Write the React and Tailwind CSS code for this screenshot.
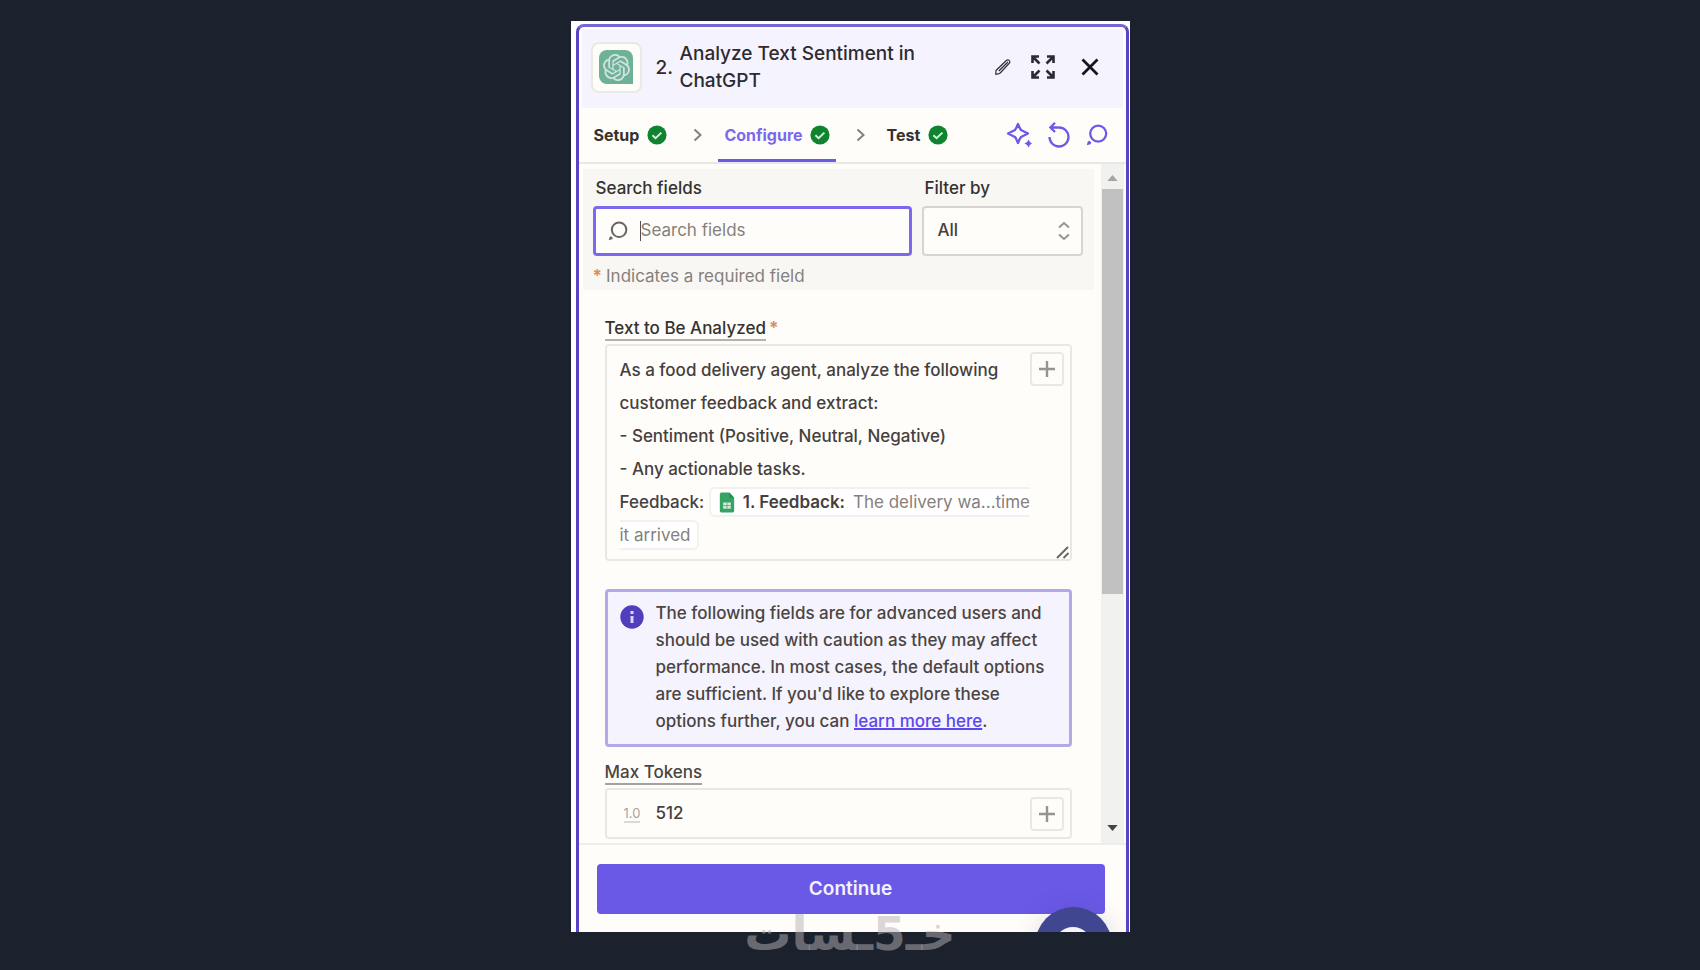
import React from "react";
import { SiOpenai } from "react-icons/si";

function CheckBadge() {
  return (
    <svg viewBox="0 0 20 20" className="size-5 shrink-0" aria-hidden="true">
      <circle cx="10" cy="10" r="9.6" fill="#0f8430" />
      <path d="M5.4 10.2l3.2 3 5.8-5.6" fill="none" stroke="#dcebdc" strokeWidth="2" />
    </svg>
  );
}

function Chevron() {
  return (
    <svg viewBox="0 0 10 14" className="h-[14px] w-[10px] shrink-0" aria-hidden="true">
      <path d="M1.5 1.5L7.5 7l-6 5.5" fill="none" stroke="#85807c" strokeWidth="2" />
    </svg>
  );
}

function Loupe({ className, width }) {
  return (
    <svg viewBox="0 0 22 22" className={className} aria-hidden="true">
      <circle cx="12.2" cy="9.6" r="8" fill="none" stroke="currentColor" strokeWidth={width} />
      <path d="M0.8 21.2l1-3.6 1.6-.8 2 1.8-1 1.6z" fill="currentColor" />
    </svg>
  );
}

function PlusButton({ label }) {
  return (
    <button
      type="button"
      aria-label={label}
      className="flex size-[34px] shrink-0 items-center justify-center rounded border-2 border-[#eae8e3] bg-[#fffdf9]"
    >
      <svg viewBox="0 0 18 18" className="size-[18px]" aria-hidden="true">
        <path d="M9 1v16M1 9h16" stroke="#98938f" strokeWidth="2.4" />
      </svg>
    </button>
  );
}

function Header() {
  return (
    <header className="mx-[3px] mt-[2px] flex items-center bg-[#f5f3fd] pb-[14px] pl-[9px] pr-6 pt-[11px] text-[#2d2a30]">
      <div className="flex size-[51px] shrink-0 items-center justify-center rounded-lg border-2 border-[#ebe9e4] bg-[#fffdf9]">
        <div className="flex size-[34px] items-center justify-center rounded-t-lg rounded-bl-lg bg-[#6eb295]">
          <SiOpenai className="size-[27px] text-[#d3e2e4]" aria-hidden="true" />
        </div>
      </div>
      <h1 className="flex flex-1 items-center text-[19px] font-medium leading-[27px]">
        <span className="ml-[14px] w-6">2.</span>
        <span className="max-w-[260px]">Analyze Text Sentiment in ChatGPT</span>
      </h1>
      <button type="button" aria-label="Rename step">
        <svg viewBox="0 0 18 18" className="size-[18px]" aria-hidden="true">
          <path
            d="M2.2 12.2L12.6 2.2c1.6-1 4 .6 3 2.8L6.2 15c-1.4 1.2-3 1-4.4 1.2.2-1.400-.2-2.800.4-4zM4.800 13L14 4"
            fill="none"
            stroke="currentColor"
            strokeWidth="1.2"
          />
        </svg>
      </button>
      <button type="button" aria-label="Expand panel" className="ml-[18px]">
        <svg viewBox="0 0 26 26" className="size-[26px]" aria-hidden="true">
          <path
            d="M2.500 9V2.500H9M2.500 2.500L9.500 9.500M17 2.500h6.500V9M23.500 2.500L16.500 9.500M2.500 17v6.500H9M2.500 23.500L9.500 16.500M23.500 17v6.500H17M23.500 23.500L16.500 16.500"
            fill="none"
            stroke="currentColor"
            strokeWidth="2.600"
          />
        </svg>
      </button>
      <button type="button" aria-label="Close" className="ml-[25px]">
        <svg viewBox="0 0 18 18" className="size-[18px]" aria-hidden="true">
          <path d="M1.500 1.500l15 15M16.500 1.500l-15 15" stroke="#17151a" strokeWidth="2.800" />
        </svg>
      </button>
    </header>
  );
}

function Steps() {
  return (
    <nav className="flex h-14 items-stretch border-b-2 border-[#eae8e3] pl-[15px] pr-[18px] text-[16px] font-bold text-[#35322f]">
      <button type="button" className="flex items-center gap-2">
        Setup <CheckBadge />
      </button>
      <span className="ml-[26px] flex items-center">
        <Chevron />
      </span>
      <button
        type="button"
        aria-current="step"
        className="ml-[15px] flex items-center gap-[7px] border-b-3 border-[#6b59ea] px-[6px] pt-[3px] text-[#7a68f0]"
      >
        Configure <CheckBadge />
      </button>
      <span className="ml-5 flex items-center">
        <Chevron />
      </span>
      <button type="button" className="ml-[21px] flex items-center gap-2">
        Test <CheckBadge />
      </button>
      <div className="ml-auto flex items-center gap-4 text-[#6b5ae8]">
        <button type="button" aria-label="Generate with AI">
          <svg viewBox="0 0 26 26" className="size-[26px]" aria-hidden="true">
            <path
              d="M12 2Q13.500 6 15 8Q18 9.500 22 11.500Q18 13.500 15 15Q13.500 17 12 21Q10.500 17 9 15Q6 13.500 2 11.500Q6 9.500 9 8Q10.500 6 12 2Z"
              fill="none"
              stroke="currentColor"
              strokeWidth="2.300"
              strokeLinejoin="round"
            />
            <path d="M22.500 17.500l1.400 2.600L26 21.500l-2.100 1.400L22.500 25.500l-1.400-2.600L18.500 21.500l2.600-1.400z" fill="currentColor" />
          </svg>
        </button>
        <button type="button" aria-label="Reset">
          <svg viewBox="0 0 22 26" className="h-[26px] w-[22px]" aria-hidden="true">
            <path
              d="M1.500 15a9.500 9.500 0 1 0 9.500-9.500H2.500M7 0.800L2.400 5.500L7 10"
              fill="none"
              stroke="currentColor"
              strokeWidth="2.300"
            />
          </svg>
        </button>
        <button type="button" aria-label="Search">
          <Loupe className="size-[22px]" width="2.300" />
        </button>
      </div>
    </nav>
  );
}

function SearchBar() {
  return (
    <section className="ml-1 mr-[7px] bg-[#f8f7f4] pb-[2px] pl-[10px] pr-[11px] pt-[7px]">
      <div className="flex gap-[10px]">
        <div className="min-w-0 flex-1">
          <label htmlFor="search-fields" className="ml-[3px] block text-[17px] font-medium leading-6 text-[#35322f]">
            Search fields
          </label>
          <div className="mt-[6px] flex h-[50px] items-center rounded border-3 border-[#7a68ee] bg-[#fffdf9] pl-3 pr-3">
            <Loupe className="mr-3 size-5 text-[#6b6560]" width="2.200" />
            <span className="h-5 w-px bg-[#55504c]" />
            <input
              id="search-fields"
              type="text"
              placeholder="Search fields"
              className="min-w-0 flex-1 bg-transparent text-[17px] text-[#35322f] outline-none placeholder:text-[#85807c]"
            />
          </div>
        </div>
        <div className="w-[161px] shrink-0">
          <label htmlFor="filter-by" className="ml-[3px] block text-[17px] font-medium leading-6 text-[#35322f]">
            Filter by
          </label>
          <div className="relative mt-[6px]">
            <select
              id="filter-by"
              className="h-[50px] w-full appearance-none rounded border-2 border-[#d8d4cf] bg-[#fffdf9] pl-[14px] text-[17px] font-medium text-[#45403e]"
            >
              <option>All</option>
            </select>
            <svg
              viewBox="0 0 12 20"
              className="pointer-events-none absolute right-[13px] top-[15px] h-5 w-3"
              aria-hidden="true"
            >
              <path d="M1 6.500L6 2l5 4.500M1 13.500L6 18l5-4.500" fill="none" stroke="#98938f" strokeWidth="2" />
            </svg>
          </div>
        </div>
      </div>
      <p className="mt-2 text-[17px] leading-6 text-[#85807c]">
        <span className="mr-1 font-bold text-[#e58a56]">*</span>
        Indicates a required field
      </p>
    </section>
  );
}

function SheetIcon() {
  return (
    <svg viewBox="0 0 16 22" className="mr-2 inline-block h-[21px] w-4 align-[-5px]" aria-hidden="true">
      <path d="M1.500 0.500h9L15.500 6v14a1.500 1.500 0 0 1-1.500 1.500H2A1.500 1.500 0 0 1 .5 20V2z" fill="#36a365" />
      <path d="M10.500 0.500L15.500 6h-5z" fill="#2c8a50" />
      <path d="M4 11h8v6.500H4z" fill="#d5eadb" />
      <path d="M4 14.200h8M8 11v6.500" stroke="#36a365" strokeWidth="0.700" />
    </svg>
  );
}

function PromptField() {
  return (
    <div className="mt-[27px]">
      <div className="flex items-start">
        <span id="prompt-label" className="border-b-2 border-[#b5b1ad] text-[17px] font-medium leading-[22px] text-[#35322f]">
          Text to Be Analyzed
        </span>
        <span className="ml-[3px] text-[17px] font-bold leading-[22px] text-[#e58a56]">*</span>
      </div>
      <div className="relative mt-[3px] flex items-start justify-between rounded border-2 border-[#eae8e3] px-[6px] py-[6px]">
        <div
          role="textbox"
          aria-multiline="true"
          aria-labelledby="prompt-label"
          contentEditable
          suppressContentEditableWarning
          className="ml-[7px] min-w-0 flex-1 pb-px pt-[2px] text-[17px] font-medium leading-[33px] text-[#45403e] outline-none"
        >
          <div className="max-w-[400px]">As a food delivery agent, analyze the following customer feedback and extract:</div>
          <div>- Sentiment (Positive, Neutral, Negative)</div>
          <div>- Any actionable tasks.</div>
          <div className="mr-[-6px]">
            Feedback:{" "}
            <span className="rounded-md border-2 border-[#f3f1ee] bg-white py-[3px] pl-2 pr-[6px]">
              <SheetIcon />
              <span className="mr-2 font-semibold">1. Feedback:</span>
              <span className="font-normal text-[#85807c]">The delivery wa...time it{"\u00a0"}arrived</span>
            </span>
          </div>
        </div>
        <PlusButton label="Insert data into text" />
        <svg viewBox="0 0 14 14" className="absolute bottom-0 right-0 size-[14px]" aria-hidden="true">
          <path d="M1 13L12 2M7.500 13L12.500 8" stroke="#6b6763" strokeWidth="2" />
        </svg>
      </div>
    </div>
  );
}

function Notice() {
  return (
    <aside className="mt-7 flex items-start rounded border-3 border-[#b3a8e8] bg-[#f5f3fd] px-3 pb-[9px] pt-2">
      <svg viewBox="0 0 24 24" className="mt-[5px] size-6 shrink-0" aria-hidden="true">
        <circle cx="12" cy="12" r="11.700" fill="#503ebd" />
        <path d="M12 6v3M12 11v7" stroke="#d9d3f5" strokeWidth="3" />
      </svg>
      <p className="ml-3 text-[17px] font-medium leading-[27px] text-[#4a4542]">
        The following fields are for advanced users and should be used with caution as they may affect performance. In
        most cases, the default options are sufficient. If you'd like to explore these options further, you can{" "}
        <a href="#learn-more" className="text-[#5a48ee] underline decoration-2">
          learn more here
        </a>
        .
      </p>
    </aside>
  );
}

function MaxTokens() {
  return (
    <div className="mt-[14px]">
      <div className="flex">
        <label
          htmlFor="max-tokens"
          className="border-b-2 border-[#a5a19d] text-[17px] font-medium leading-[22px] text-[#4a4542]"
        >
          Max Tokens
        </label>
      </div>
      <div className="mt-[3px] flex h-[51px] items-center rounded border-2 border-[#eae8e3] pl-[17px] pr-[6px]">
        <span className="mr-[15px] border-b-2 border-[#dcd9d5] text-[13px] leading-4 text-[#a8a39f]">1.0</span>
        <input
          id="max-tokens"
          type="text"
          defaultValue="512"
          className="min-w-0 flex-1 bg-transparent text-[17px] font-medium text-[#45403e] outline-none"
        />
        <PlusButton label="Insert data into max tokens" />
      </div>
    </div>
  );
}

function ScrollRail() {
  return (
    <div className="mr-[2px] flex w-[23px] shrink-0 flex-col items-center bg-[#f1f1f0]" aria-hidden="true">
      <svg viewBox="0 0 12 7" className="mb-2 mt-[11px] h-[6px] w-[11px]">
        <path d="M6 0l6 7H0z" fill="#a5a5a5" />
      </svg>
      <div className="h-[405px] w-[21px] bg-[#c1c1c1]" />
      <svg viewBox="0 0 12 7" className="mb-[12px] mt-auto h-[6px] w-[11px]">
        <path d="M6 7L12 0H0z" fill="#454545" />
      </svg>
    </div>
  );
}

export default function App() {
  return (
    <main className="relative flex min-h-screen items-start justify-center bg-[#1b222d] pt-[21px] font-['Inter',sans-serif]">
      <div className="relative w-full max-w-[559px]">
        <div className="relative overflow-hidden bg-white pl-[5px] pr-px pt-[3px]">
          <div className="rounded-t-lg border-x-3 border-t-3 border-[#5944c6] border-t-[#7765d2] bg-[#fffdf9]">
            <Header />
            <Steps />
            <div className="flex">
              <div className="min-w-0 flex-1 pb-1 pt-[5px]">
                <SearchBar />
                <div className="pl-[26px] pr-[29px]">
                  <PromptField />
                  <Notice />
                  <MaxTokens />
                </div>
              </div>
              <ScrollRail />
            </div>
            <footer className="border-t-2 border-[#f0eeea] pb-[18px] pl-[18px] pr-[21px] pt-[19px]">
              <button
                type="button"
                className="h-[50px] w-full rounded bg-[#6a59e6] text-[19px] font-semibold text-[#f3f1ff]"
              >
                Continue
              </button>
            </footer>
          </div>
          <button
            type="button"
            aria-label="Help"
            className="absolute bottom-[-52px] right-[18px] flex size-[77px] items-center justify-center rounded-full bg-[#40468f] shadow-[0_0_24px_rgba(60,50,120,0.15)]"
          >
            <span className="size-[38px] rounded-full bg-[#f4f4f8]" />
          </button>
        </div>
        <div
          lang="ar"
          dir="rtl"
          className="pointer-events-none absolute bottom-[-32px] left-0 w-full text-center font-['DejaVu_Sans',sans-serif] text-[47px] font-bold leading-[60px] text-[#b8b0b6]/50"
        >
          خـ5ـسات
        </div>
      </div>
    </main>
  );
}
